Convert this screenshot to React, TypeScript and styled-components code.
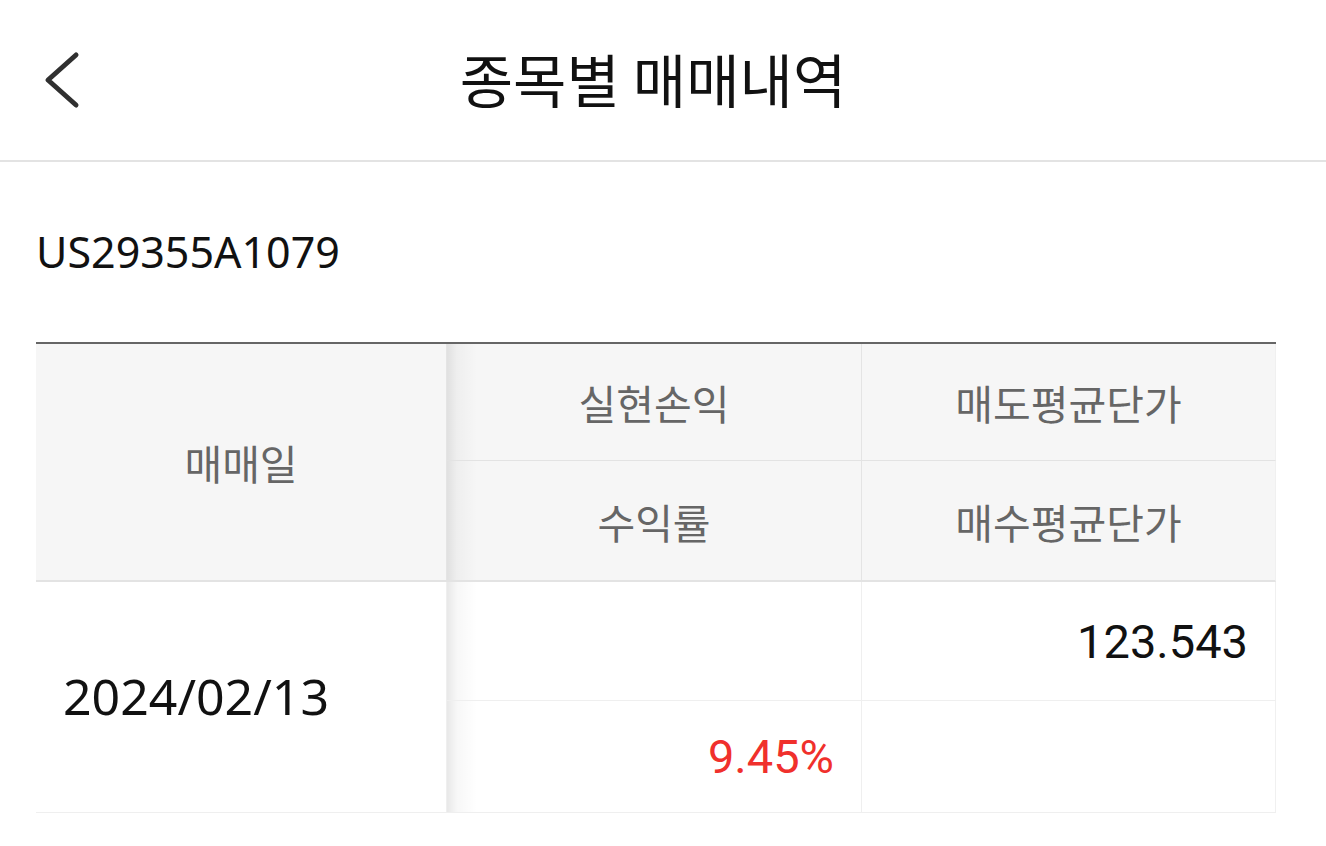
import styled, { createGlobalStyle } from 'styled-components';

const GlobalStyle = createGlobalStyle`
  html, body {
    margin: 0;
    padding: 0;
    background: #ffffff;
  }
  body {
    font-family: "Noto Sans", "Noto Sans CJK KR", sans-serif;
    color: #111;
  }
`;

const rows = {
  date: '2024/02/13',
  profit: '',
  sellPrice: '123.543',
  rate: '9.45%',
  buyPrice: '',
};

const App = () => {
  return (
    <Page>
      <GlobalStyle />
      <Header>
        <BackBtn aria-label="뒤로가기">
          <svg width="44" height="62" viewBox="0 0 44 62" fill="none">
            <path
              d="M36 6 L8 31 L36 56"
              stroke="#303030"
              strokeWidth="5"
              strokeLinecap="round"
              strokeLinejoin="round"
            />
          </svg>
        </BackBtn>
        <Title>종목별 매매내역</Title>
        <span />
      </Header>

      <Content>
        <Code>US29355A1079</Code>

        <Table>
          <Cell $head $rows={2} $bottom="thick" $right>
            매매일
          </Cell>
          <Cell $head $shade $bottom="thin" $right>
            실현손익
          </Cell>
          <Cell $head $bottom="thin" $edge>
            매도평균단가
          </Cell>
          <Cell $head $shade $bottom="thick" $right>
            수익률
          </Cell>
          <Cell $head $bottom="thick" $edge>
            매수평균단가
          </Cell>

          <Cell $rows={2} $align="left" $bottom="body" $right>
            <DateText>{rows.date}</DateText>
          </Cell>
          <Cell $shade $align="right" $bottom="body" $right>
            <Num>{rows.profit}</Num>
          </Cell>
          <Cell $align="right" $bottom="body" $edge>
            <Num>{rows.sellPrice}</Num>
          </Cell>
          <Cell $shade $align="right" $bottom="body" $right>
            <Num $red>{rows.rate}</Num>
          </Cell>
          <Cell $align="right" $bottom="body" $edge>
            <Num>{rows.buyPrice}</Num>
          </Cell>
        </Table>
      </Content>
    </Page>
  );
};

export default App;

const Page = styled.div`
  width: 100%;
  min-height: 846px;
  background: #fff;
`;

const Header = styled.header`
  height: 160px;
  display: grid;
  grid-template-columns: 1fr auto 1fr;
  align-items: center;
  border-bottom: 2px solid #e3e3e3;
`;

const BackBtn = styled.div`
  cursor: pointer;
  padding-left: 40px;
  display: flex;
  align-items: center;
  justify-self: start;
`;

const Title = styled.h1`
  margin: 0;
  font-family: "Noto Sans CJK KR", sans-serif;
  font-size: 58px;
  font-weight: 400;
  color: #111;
  padding-right: 20px;
  padding-bottom: 4px;
`;

const Content = styled.main`
  padding: 0 50px 0 36px;
`;

const Code = styled.div`
  height: 180px;
  display: flex;
  align-items: center;
  font-family: "Noto Sans", sans-serif;
  font-size: 43px;
  color: #111;
  padding-bottom: 2px;
  box-sizing: border-box;
`;

const Table = styled.div`
  display: grid;
  grid-template-columns: 411px 415px 414px;
  grid-template-rows: 117px 121px 119px 112px;
  border-top: 2px solid #666;
`;

type CellProps = {
  $head?: boolean;
  $rows?: number;
  $align?: 'left' | 'center' | 'right';
  $bottom?: 'thin' | 'thick' | 'body';
  $right?: boolean;
  $edge?: boolean;
  $shade?: boolean;
};

const Cell = styled.div<CellProps>`
  box-sizing: border-box;
  display: flex;
  align-items: center;
  justify-content: ${(p) =>
    p.$align === 'left' ? 'flex-start' : p.$align === 'right' ? 'flex-end' : 'center'};
  padding: 0 27px;
  grid-row: ${(p) => (p.$rows ? `span ${p.$rows}` : 'auto')};
  font-family: "Noto Sans CJK KR", sans-serif;
  font-size: 41px;
  color: #666;
  background: ${(p) =>
    p.$shade
      ? `linear-gradient(to right, rgba(0,0,0,0.09), rgba(0,0,0,0.03) 10px, rgba(0,0,0,0) 30px) no-repeat, ${p.$head ? '#f6f6f6' : '#fff'}`
      : p.$head
      ? '#f6f6f6'
      : '#fff'};
  border-bottom: ${(p) =>
    p.$bottom === 'thick'
      ? '2px solid #e3e3e3'
      : p.$bottom === 'thin'
      ? '1px solid #e3e3e3'
      : p.$bottom === 'body'
      ? '1px solid #efefef'
      : 'none'};
  border-right: ${(p) =>
    p.$right ? `1px solid ${p.$head ? '#e4e4e4' : '#efefef'}` : p.$edge ? '1px solid #f0f0f0' : 'none'};
`;

const DateText = styled.span`
  font-family: "Noto Sans", sans-serif;
  font-size: 50px;
  color: #111;
  padding-bottom: 2px;
`;

const Num = styled.span<{ $red?: boolean }>`
  font-family: Roboto, sans-serif;
  font-size: 47px;
  color: ${(p) => (p.$red ? '#f0302c' : '#111')};
`;
